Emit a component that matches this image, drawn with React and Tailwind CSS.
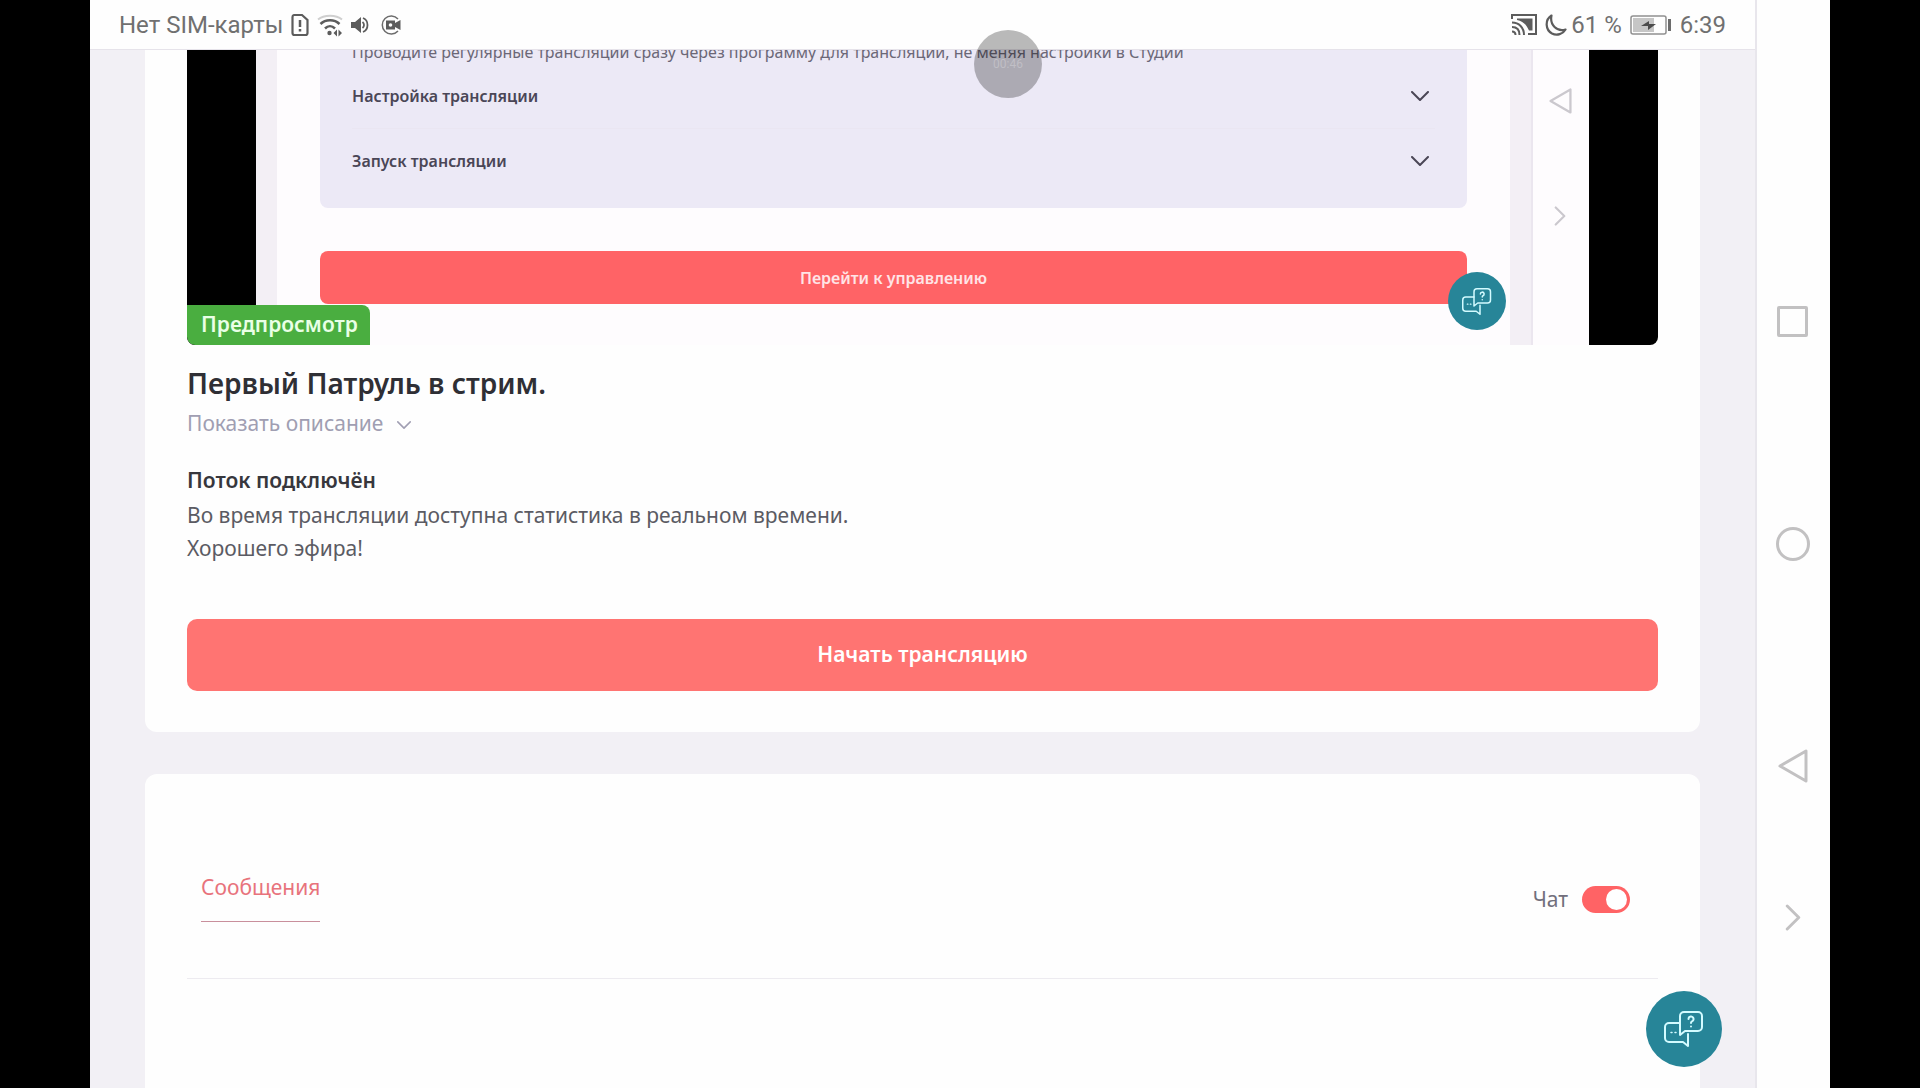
import React, { useState } from 'react';

const ChevronDown = ({ className }) => (
  <svg className={className} viewBox="0 0 18 10" fill="none" stroke="currentColor" strokeLinecap="round" strokeLinejoin="round" aria-hidden="true">
    <path d="M1 1l8 8 8-8" />
  </svg>
);

const BackIcon = ({ className }) => (
  <svg className={className} viewBox="0 0 30 34" fill="none" stroke="currentColor" strokeWidth="3" strokeLinejoin="round" aria-hidden="true">
    <path d="M28 2v30L2 17z" />
  </svg>
);

const NextIcon = ({ className }) => (
  <svg className={className} viewBox="0 0 16 28" fill="none" stroke="currentColor" strokeWidth="3" strokeLinecap="round" strokeLinejoin="round" aria-hidden="true">
    <path d="M2 2l12 12L2 26" />
  </svg>
);

const SupportIcon = ({ className }) => (
  <svg className={className} viewBox="0 0 40 36" fill="none" stroke="#d3fbff" strokeWidth="2" strokeLinecap="round" strokeLinejoin="round" aria-hidden="true">
    <path d="M20 1h14a4 4 0 0 1 4 4v11a4 4 0 0 1-4 4H21l-5 4V5a4 4 0 0 1 4-4z" />
    <path d="M16 12H5a4 4 0 0 0-4 4v11a4 4 0 0 0 4 4h14l5 4V23" />
    <path d="M24.500 8a2.500 2.500 0 1 1 3.500 2.300c-.8.4-1 .8-1 1.700M27 15.500v.1" />
    <path d="M7 21.500h1M11 21.500h1" strokeWidth="1.500" />
  </svg>
);

const StatusBar = () => (
  <header className="flex h-[50px] shrink-0 items-center justify-between border-b border-[#e6e3ea] bg-[#fefefe] pr-[29px] pl-[29px] font-['Roboto',sans-serif] text-2xl text-[#707070]">
    <div className="flex items-center">
      <span>Нет SIM-карты</span>
      <svg className="ml-2 h-6 w-[18px]" viewBox="0 0 18 24" fill="none" stroke="#5c5c5c" strokeWidth="2.2" aria-hidden="true">
        <path d="M3 2h8l5.500 5v13a2 2 0 0 1-2 2H3.500a2 2 0 0 1-2-2V4A2 2 0 0 1 3 2z" />
        <path d="M9 7v7M9 16v2.500" strokeWidth="2.500" />
      </svg>
      <svg className="ml-2 h-6 w-[26px]" viewBox="0 0 26 24" fill="none" stroke="#5c5c5c" strokeWidth="2" aria-hidden="true">
        <path d="M1 6.500c6-5 18-5 24 0" stroke="#cfcfcf" />
        <path d="M3.500 11c5-5 14-5 19 0M8 15.500c3-3 7-3 10 0" strokeWidth="2.500" />
        <circle cx="12.500" cy="20" r="2.200" fill="#5c5c5c" stroke="none" />
        <path d="M20 16.500v7L16.500 20zM21.500 16.500v7L25 20z" fill="#5c5c5c" stroke="none" />
      </svg>
      <svg className="ml-2 h-[18px] w-[18px]" viewBox="0 0 18 18" aria-hidden="true">
        <path d="M0 6h4l6-5v16l-6-5H0z" fill="#5c5c5c" />
        <path d="M11.500 6c2 1.500 2 4.500 0 6M12 2c6 2.500 6 11.500 0 14" fill="none" stroke="#5c5c5c" strokeWidth="1.800" />
      </svg>
      <svg className="ml-3 h-5 w-5" viewBox="0 0 20 20" aria-hidden="true">
        <path d="M17 4a9 9 0 1 0 0 12" fill="none" stroke="#6c6c6c" strokeWidth="1.500" />
        <path d="M5 5.500h9v2.500l5.500-3v10L14 12v2.500H5z" fill="#5c5c5c" />
        <circle cx="9.500" cy="10" r="1.800" fill="#fefefe" />
      </svg>
    </div>
    <div className="flex items-center">
      <svg className="h-[22px] w-[26px]" viewBox="0 0 26 22" fill="none" stroke="#5c5c5c" strokeWidth="2" aria-hidden="true">
        <path d="M1 5V1h24v19h-8" />
        <path d="M6 4.500h15.500v12H18C15 10 12 7.500 6 6z" fill="#5c5c5c" stroke="none" />
        <path d="M1 8.500c7 0 12 5 12 12.500M1 13c5 0 7.500 3 7.500 8M1 17.500c2.500 0 3.500 1.500 3.500 3.500" />
      </svg>
      <svg className="ml-2 h-[22px] w-[22px]" viewBox="0 0 22 22" fill="none" stroke="#5c5c5c" strokeWidth="2.2" strokeLinejoin="round" aria-hidden="true">
        <path d="M6.500 1.500C-.5 6 .5 16 7 19.500c5 2.500 11 .5 13.500-4C12 18 4.500 11 6.500 1.500z" />
      </svg>
      <span className="ml-1">61 %</span>
      <svg className="ml-2 h-5 w-[42px]" viewBox="0 0 42 20" aria-hidden="true">
        <rect x="1" y="1" width="35" height="18" rx="2" fill="#fefefe" stroke="#909090" strokeWidth="1.500" />
        <path d="M3 3h21v14H3z" fill="#c6c6c6" />
        <path d="M11 11l8-5v3h7l-8 6v-4z" fill="#4c4c4c" />
        <path d="M38 4h3v12h-3z" fill="#6c6c6c" />
      </svg>
      <span className="ml-2">6:39</span>
    </div>
  </header>
);

const SystemNav = () => (
  <nav className="flex w-[75px] shrink-0 flex-col items-center border-l-2 border-[#e8e6ec] bg-[#fefefe] pt-[281px] pr-0.5 text-[#c2c1c2]">
    <button type="button" aria-label="Недавние" className="flex h-20 w-full items-center justify-center">
      <span className="h-[31px] w-[31px] rounded-xs border-[3px] border-current" />
    </button>
    <button type="button" aria-label="Домой" className="mt-[143px] flex h-20 w-full items-center justify-center">
      <span className="h-[34px] w-[34px] rounded-full border-[3px] border-current" />
    </button>
    <button type="button" aria-label="Назад" className="mt-[142px] flex h-20 w-full items-center justify-center">
      <BackIcon className="h-[34px] w-[30px]" />
    </button>
    <button type="button" aria-label="Скрыть" className="mt-[71px] flex h-20 w-full items-center justify-center">
      <NextIcon className="h-[27px] w-4" />
    </button>
  </nav>
);

const sections = ['Настройка трансляции', 'Запуск трансляции'];

const Preview = () => (
  <div className="relative flex h-[295px] overflow-hidden rounded-b-lg bg-black px-[69px]">
    <div className="relative min-w-0 flex-1 border-x-[21px] border-[#f3eff5] bg-[#fefcfe] px-[43px]">
      <div className="rounded-b-lg bg-[#ece9f6] px-8 pb-3.5 text-[#4a4656]">
        <p className="-mt-2.5 text-base leading-6 whitespace-nowrap text-[#6b6777]">
          Проводите регулярные трансляции сразу через программу для трансляции, не меняя настройки в Студии
        </p>
        {sections.map((section) => (
          <button
            key={section}
            type="button"
            className="flex h-[65px] w-full items-center justify-between border-b border-[#eae6f2] pr-1.5 text-base font-semibold last:border-transparent"
          >
            {section}
            <ChevronDown className="h-2.5 w-[18px] stroke-2" />
          </button>
        ))}
      </div>
      <button type="button" className="mt-[43px] h-[53px] w-full rounded-lg bg-[#ff6366] text-base font-semibold text-[#ffe4e6]">
        Перейти к управлению
      </button>
      <button type="button" aria-label="Поддержка" className="absolute right-1 bottom-[15px] flex h-[58px] w-[58px] items-center justify-center rounded-full bg-[#278598]">
        <SupportIcon className="h-[27px] w-[30px]" />
      </button>
    </div>
    <div className="flex w-[58px] flex-col items-center border-l-2 border-[#ebe6ef] bg-[#fefcfe] pt-[38px] pr-0.5 text-[#cbc8ce]">
      <BackIcon className="h-[26px] w-[23px]" />
      <NextIcon className="mt-[92px] h-5 w-3" />
    </div>
    <span className="absolute bottom-0 left-0 flex h-10 items-center rounded-tr-lg rounded-bl-lg bg-[#4aae40] pr-3 pl-3.5 text-[21px] font-semibold text-[#e9ffe6]">
      Предпросмотр
    </span>
  </div>
);

const App = () => {
  const [chat, setChat] = useState(true);

  return (
    <div className="flex h-screen overflow-hidden bg-black px-[90px] font-['Noto_Sans',sans-serif]">
      <div className="relative flex min-w-0 flex-1 flex-col">
        <StatusBar />
        <main className="flex min-h-0 flex-1 flex-col overflow-hidden bg-[#f2f0f5] px-[55px]">
          <section className="shrink-0 rounded-b-xl bg-[#fefefe] px-[42px] pb-[41px]">
            <Preview />
            <h1 className="mt-5 text-[28px] leading-9 font-semibold text-[#2f2f35]">Первый Патруль в стрим.</h1>
            <button type="button" className="mt-1.5 flex items-center gap-3.5 text-[21px] leading-8 text-[#a09eb2]">
              Показать описание
              <ChevronDown className="mt-1 h-2 w-3.5 stroke-2" />
            </button>
            <h2 className="mt-[25px] text-[21px] leading-8 font-semibold text-[#37373d]">Поток подключён</h2>
            <p className="mt-[3px] text-[21px] leading-[33px] text-[#5b5b63]">
              Во время трансляции доступна статистика в реальном времени.
              <br />
              Хорошего эфира!
            </p>
            <button type="button" className="mt-[54px] h-[72px] w-full rounded-[10px] bg-[#ff7472] text-[21px] font-semibold text-white">
              Начать трансляцию
            </button>
          </section>

          <section className="mt-[42px] flex-1 rounded-t-xl bg-[#fefefe] px-[42px] pt-[97px]">
            <div className="flex items-start justify-between border-b border-[#edebf0] pr-7 pb-14 pl-3.5">
              <a href="#messages" className="border-b border-[#c98f9c] pb-[18px] text-[21px] leading-8 text-[#e8737c]">
                Сообщения
              </a>
              <label className="flex cursor-pointer items-center gap-3.5 pt-3 text-[21px] leading-8 text-[#716f7c]">
                Чат
                <input type="checkbox" checked={chat} onChange={(e) => setChat(e.target.checked)} className="peer sr-only" />
                <span className="flex h-[27px] w-12 items-center rounded-full bg-[#c9c7d0] px-[3px] peer-checked:justify-end peer-checked:bg-[#ff6365]">
                  <span className="h-[21px] w-[21px] rounded-full bg-white" />
                </span>
              </label>
            </div>
          </section>
        </main>

        <button type="button" aria-label="Поддержка" className="absolute right-[33px] bottom-[21px] flex h-[76px] w-[76px] items-center justify-center rounded-full bg-[#278598]">
          <SupportIcon className="h-9 w-10" />
        </button>

        {/* floating recorder bubble */}
        <span className="absolute top-[30px] left-[884px] flex h-[68px] w-[68px] items-center justify-center rounded-full bg-black/27 font-['Roboto',sans-serif] text-xs text-white/25">
          00:46
        </span>
      </div>
      <SystemNav />
    </div>
  );
};

export default App;
